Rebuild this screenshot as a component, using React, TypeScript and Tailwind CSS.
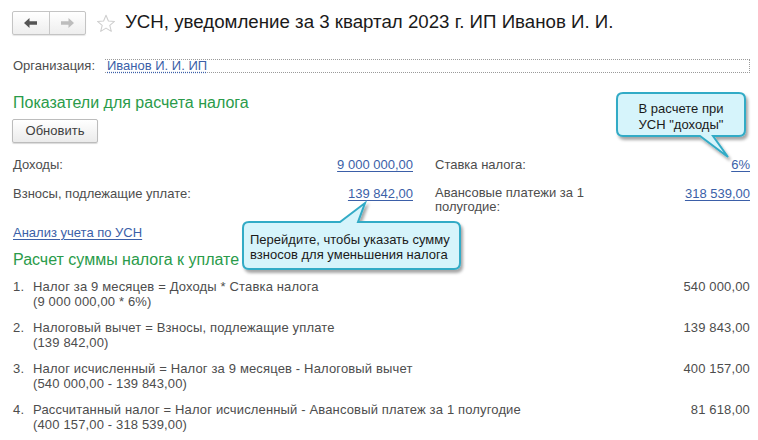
import React from "react";

const ITEMS = [
  {
    n: "1.",
    text: "Налог за 9 месяцев = Доходы * Ставка налога",
    calc: "(9 000 000,00 * 6%)",
    value: "540 000,00",
  },
  {
    n: "2.",
    text: "Налоговый вычет = Взносы, подлежащие уплате",
    calc: "(139 842,00)",
    value: "139 843,00",
  },
  {
    n: "3.",
    text: "Налог исчисленный = Налог за 9 месяцев - Налоговый вычет",
    calc: "(540 000,00 - 139 843,00)",
    value: "400 157,00",
  },
  {
    n: "4.",
    text: "Рассчитанный налог = Налог исчисленный - Авансовый платеж за 1 полугодие",
    calc: "(400 157,00 - 318 539,00)",
    value: "81 618,00",
  },
];

function Arrow({ dir, color }: { dir: "left" | "right"; color: string }) {
  return (
    <svg width="13" height="10" viewBox="0 0 13 10" className={dir === "right" ? "scale-x-[-1]" : ""}>
      <path d="M0 5 L5.5 0 V3.3 H13 V6.7 H5.5 V10 Z" fill={color} />
    </svg>
  );
}

function Bubble({
  path,
  width,
  height,
}: {
  path: string;
  width: number;
  height: number;
}) {
  return (
    <svg width={width} height={height} className="absolute left-0 top-0">
      <defs>
        <filter id={`sh${width}`} x="-10%" y="-10%" width="130%" height="140%">
          <feDropShadow dx="2" dy="3" stdDeviation="1.8" floodColor="#000" floodOpacity="0.35" />
        </filter>
      </defs>
      <path d={path} fill="#d6f4fb" stroke="#33abc6" strokeWidth="2" filter={`url(#sh${width})`} />
    </svg>
  );
}

export default function App() {
  return (
    <div className="relative w-[758px] h-[440px] overflow-hidden bg-white font-['Liberation_Sans',Arial,sans-serif] text-[13px] text-[#4d4d4d]">
      {/* Header */}
      <div className="flex items-center h-[46px] pl-[12px]">
        <div className="flex h-[24px] w-[74px] rounded-[2px] border border-[#c4c4c4] bg-gradient-to-b from-white to-[#eeeeee] shadow-[0_1px_1px_rgba(0,0,0,0.1)]">
          <div className="flex flex-1 items-center justify-center border-r border-[#c8c8c8]">
            <Arrow dir="left" color="#555555" />
          </div>
          <div className="flex flex-1 items-center justify-center">
            <Arrow dir="right" color="#bdbdbd" />
          </div>
        </div>
        <svg width="20" height="19" viewBox="0 0 24 23" className="ml-[10px]">
          <path
            d="M12 1.5 L14.9 8.4 L22.3 9 L16.6 13.8 L18.4 21 L12 17.1 L5.6 21 L7.4 13.8 L1.7 9 L9.1 8.4 Z"
            fill="none"
            stroke="#cfcfcf"
            strokeWidth="1.3"
            strokeLinejoin="round"
          />
        </svg>
        <div className="ml-[9px] text-[18.7px] leading-[24px] text-[#1a1a1a] mb-[2px]">
          УСН, уведомление за 3 квартал 2023 г. ИП Иванов И. И.
        </div>
      </div>

      {/* Organization */}
      <div className="flex items-center mt-[13px] h-[14px] pl-[13px]">
        <span className="w-[92px]">Организация:</span>
        <div className="flex items-center h-[14px] w-[645px] border border-dotted border-[#9a9a9a] border-l-0">
          <span className="ml-[2px] text-[#3b5fa8] underline decoration-dotted underline-offset-2">
            Иванов И. И. ИП
          </span>
        </div>
      </div>

      {/* Indicators */}
      <div className="mt-[20px] pl-[13px] text-[16px] leading-[19px] text-[#2a9b4a]">
        Показатели для расчета налога
      </div>
      <div className="mt-[7px] ml-[12px] flex h-[24px] w-[86px] items-center justify-center rounded-[2px] border border-[#bcbcbc] bg-gradient-to-b from-white to-[#ebebeb] text-[#404040] shadow-[0_1px_1px_rgba(0,0,0,0.15)]">
        Обновить
      </div>

      <div className="mt-[14px] grid grid-cols-[400px_315px] gap-x-[22px] pl-[13px] leading-[15px]">
        <div className="flex justify-between">
          <span>Доходы:</span>
          <span className="text-[#3b5fa8] underline underline-offset-2">9 000 000,00</span>
        </div>
        <div className="flex justify-between">
          <span>Ставка налога:</span>
          <span className="text-[#3b5fa8] underline underline-offset-2">6%</span>
        </div>
        <div className="mt-[14px] flex justify-between">
          <span>Взносы, подлежащие уплате:</span>
          <span className="text-[#3b5fa8] underline underline-offset-2">139 842,00</span>
        </div>
        <div className="mt-[14px] flex justify-between">
          <span className="leading-[14px]">
            Авансовые платежи за 1
            <br />
            полугодие:
          </span>
          <span className="text-[#3b5fa8] underline underline-offset-2">318 539,00</span>
        </div>
      </div>

      <div className="mt-[11px] pl-[13px] leading-[16px]">
        <span className="text-[#3b5fa8] underline underline-offset-2">Анализ учета по УСН</span>
      </div>

      {/* Calculation */}
      <div className="mt-[9px] pl-[13px] text-[16px] leading-[19px] text-[#2a9b4a]">
        Расчет суммы налога к уплате
      </div>

      <div className="mt-[10px] flex flex-col gap-[11px] pl-[13px] pr-[8px] leading-[15px] tracking-[0.15px]">
        {ITEMS.map((it) => (
          <div key={it.n} className="flex">
            <span className="w-[20px]">{it.n}</span>
            <div className="flex-1">
              <div>{it.text}</div>
              <div>{it.calc}</div>
            </div>
            <span>{it.value}</span>
          </div>
        ))}
      </div>

      {/* Callout: tax rate */}
      <div className="absolute left-[610px] top-[86px] w-[150px] h-[80px]">
        <Bubble
          width={150}
          height={80}
          path="M13 7 H129 Q135 7 135 13 V44 Q135 50 129 50 H103 L118 71 L90 50 H13 Q7 50 7 44 V13 Q7 7 13 7 Z"
        />
        <div className="absolute left-[7px] top-[15px] w-[128px] text-center leading-[16px] text-[#1a1a1a]">
          В расчете при
          <br />
          УСН "доходы"
        </div>
      </div>

      {/* Callout: contributions */}
      <div className="absolute left-[236px] top-[196px] w-[235px] h-[85px]">
        <Bubble
          width={235}
          height={85}
          path="M13 26 H104 L129 7 L122 26 H218 Q224 26 224 32 V67 Q224 73 218 73 H13 Q7 73 7 67 V32 Q7 26 13 26 Z"
        />
        <div className="absolute left-[14px] top-[36px] leading-[15px] text-[#1a1a1a]">
          Перейдите, чтобы указать сумму
          <br />
          взносов для уменьшения налога
        </div>
      </div>
    </div>
  );
}
